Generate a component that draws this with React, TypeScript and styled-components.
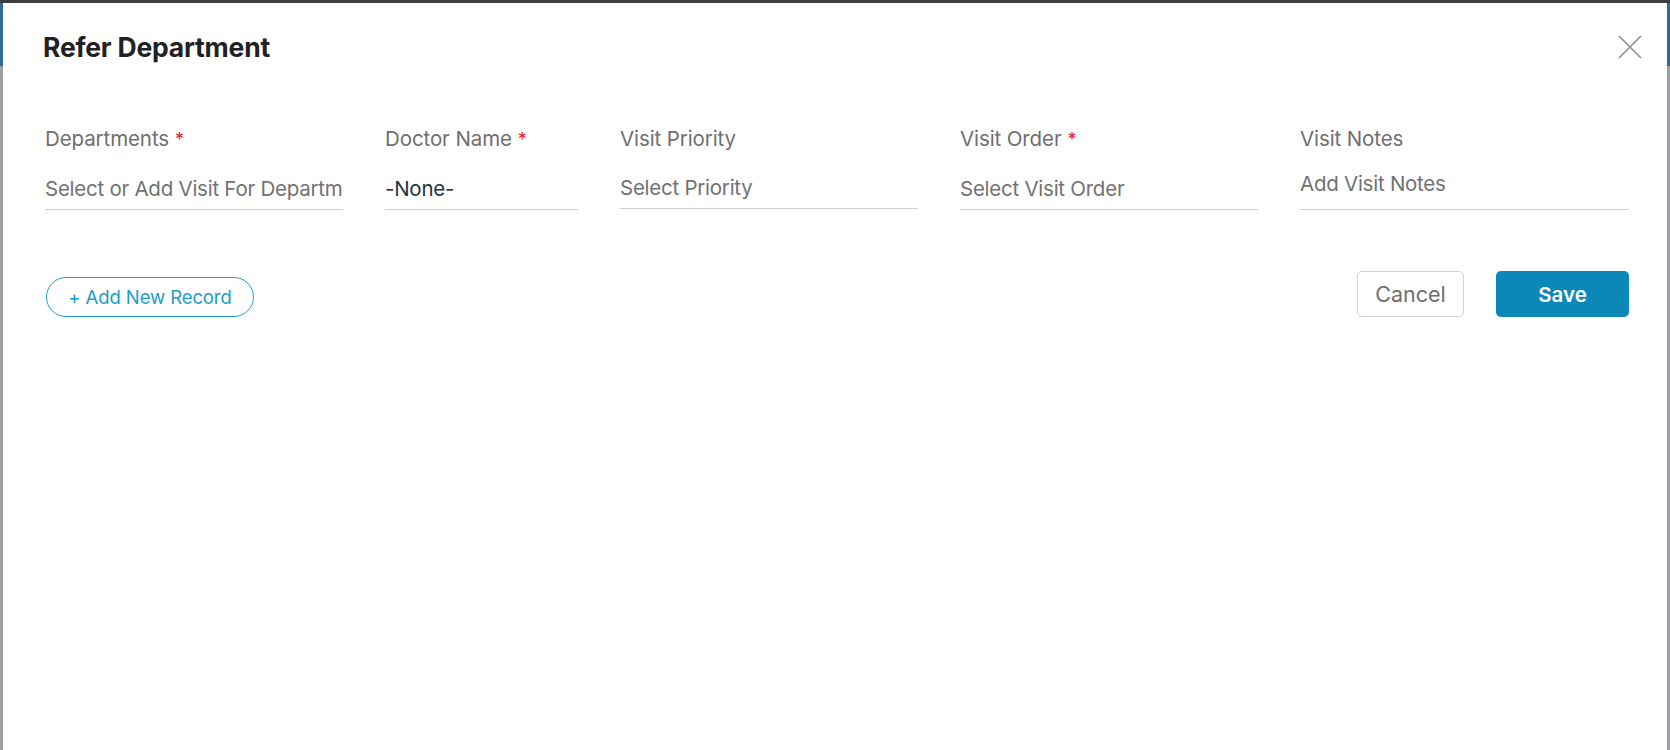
import React from "react";
import styled, { createGlobalStyle } from "styled-components";

const GlobalStyle = createGlobalStyle`
  html, body {
    margin: 0;
    padding: 0;
    height: 100%;
  }
  body {
    font-family: Inter, "Liberation Sans", Arial, sans-serif;
    -webkit-font-smoothing: antialiased;
  }
  * {
    box-sizing: border-box;
  }
`;

type Field = {
  label: string;
  value: string;
  required?: boolean;
  filled?: boolean;
  area?: boolean;
};

const fields: Field[] = [
  { label: "Departments", value: "Select or Add Visit For Departm", required: true },
  { label: "Doctor Name", value: "-None-", required: true, filled: true },
  { label: "Visit Priority", value: "Select Priority" },
  { label: "Visit Order", value: "Select Visit Order", required: true },
  { label: "Visit Notes", value: "Add Visit Notes", area: true },
];

const App: React.FC = () => {
  return (
    <>
      <GlobalStyle />
      <Backdrop>
        <Modal>
          <Header>
            <Title>Refer Department</Title>
            <CloseButton aria-label="Close">
              <svg width="24" height="24" viewBox="0 0 24 24">
                <path
                  d="M1 1 L23 23 M23 1 L1 23"
                  stroke="#8d8d8d"
                  strokeWidth="1.6"
                  fill="none"
                />
              </svg>
            </CloseButton>
          </Header>

          <FieldGrid>
            {fields.map((f) => (
              <FieldBox key={f.label}>
                <Label>
                  {f.label}
                  {f.required && <Star>*</Star>}
                </Label>
                <Value $filled={f.filled} $area={f.area}>
                  {f.value}
                </Value>
              </FieldBox>
            ))}
          </FieldGrid>

          <Actions>
            <AddButton>+ Add New Record</AddButton>
            <RightGroup>
              <CancelButton>Cancel</CancelButton>
              <SaveButton>Save</SaveButton>
            </RightGroup>
          </Actions>
        </Modal>
      </Backdrop>
    </>
  );
};

export default App;

const Backdrop = styled.div`
  height: 100vh;
  padding: 3px 3px 0 3px;
  background: linear-gradient(
    #3b3d3e 0 3px,
    #2b6d95 3px 66px,
    #9ca0a6 66px
  );
`;

const Modal = styled.div`
  height: 100%;
  background: #ffffff;
  display: flex;
  flex-direction: column;
  padding: 0 38px 0 42px;
`;

const Header = styled.div`
  display: flex;
  justify-content: space-between;
  align-items: center;
  padding-top: 28px;
  margin-left: -2px;
  margin-right: -13px;
`;

const Title = styled.h2`
  margin: 0;
  font-size: 26.5px;
  line-height: 32px;
  font-weight: 700;
  color: #1f2224;
  letter-spacing: -0.2px;
`;

const CloseButton = styled.button`
  border: 0;
  background: none;
  padding: 0;
  width: 24px;
  height: 24px;
  display: flex;
  cursor: pointer;
`;

const FieldGrid = styled.div`
  display: grid;
  grid-template-columns: 298px 193px 298px 298px 1fr;
  column-gap: 42px;
  margin-top: 64px;
`;

const FieldBox = styled.div`
  display: flex;
  flex-direction: column;
  min-width: 0;
`;

const Label = styled.div`
  font-size: 20.5px;
  line-height: 24px;
  color: #6f6f6f;
  letter-spacing: -0.1px;
`;

const Star = styled.span`
  color: #e4231f;
  margin-left: 6px;
  font-size: 18px;
`;

const Value = styled.div<{ $filled?: boolean; $area?: boolean }>`
  margin-top: ${(p) => (p.$area ? "21px" : "25px")};
  padding-bottom: ${(p) => (p.$area ? "13px" : "8px")};
  font-size: 20.5px;
  line-height: 24px;
  color: ${(p) => (p.$filled ? "#26333d" : "#727272")};
  letter-spacing: -0.25px;
  white-space: nowrap;
  overflow: hidden;
  border-bottom: 1px solid #cfcfcf;
`;

const Actions = styled.div`
  display: flex;
  justify-content: space-between;
  align-items: flex-end;
  margin-top: 61px;
  padding-left: 1px;
`;

const RightGroup = styled.div`
  display: flex;
  gap: 32px;
`;

const AddButton = styled.button`
  height: 40px;
  width: 208px;
  border: 1px solid #1fa2c9;
  border-radius: 20px;
  background: #fff;
  color: #1a9dc6;
  font-family: inherit;
  font-size: 18.5px;
  letter-spacing: -0.1px;
  cursor: pointer;
`;

const CancelButton = styled.button`
  height: 46px;
  width: 107px;
  border: 1px solid #d3d3d3;
  border-radius: 5px;
  background: #fff;
  color: #6e6e6e;
  font-family: inherit;
  font-size: 21.5px;
  cursor: pointer;
`;

const SaveButton = styled.button`
  height: 46px;
  width: 133px;
  border: 0;
  border-radius: 5px;
  background: #0b87b8;
  color: #fff;
  font-family: inherit;
  font-size: 20.5px;
  font-weight: 600;
  cursor: pointer;
`;
